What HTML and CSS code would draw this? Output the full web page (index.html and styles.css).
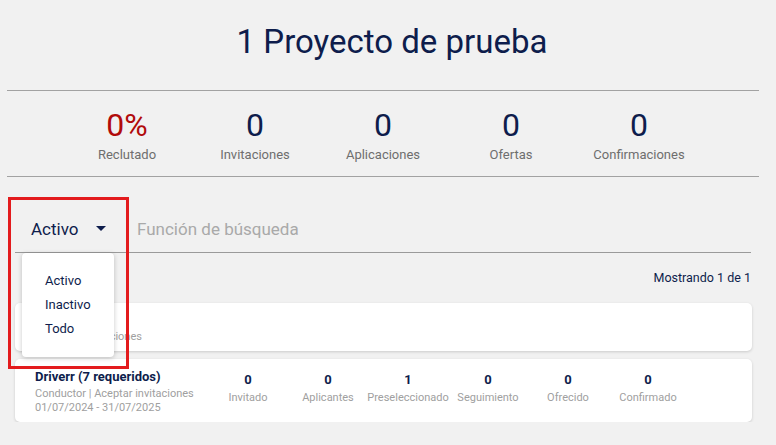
FILE: index.html
```html
<!DOCTYPE html>
<html lang="es">
<head>
  <meta charset="UTF-8" />
  <meta name="viewport" content="width=device-width, initial-scale=1" />
  <title>1 Proyecto de prueba</title>
  <link rel="stylesheet" href="styles.css">
</head>
<body>
  <main class="page">
    <header class="title">
      <h1>1 Proyecto de prueba</h1>
    </header>

    <section class="summary">
      <div class="summary-item">
        <span class="summary-num red">0%</span>
        <span class="summary-label">Reclutado</span>
      </div>
      <div class="summary-item">
        <span class="summary-num">0</span>
        <span class="summary-label">Invitaciones</span>
      </div>
      <div class="summary-item">
        <span class="summary-num">0</span>
        <span class="summary-label">Aplicaciones</span>
      </div>
      <div class="summary-item">
        <span class="summary-num">0</span>
        <span class="summary-label">Ofertas</span>
      </div>
      <div class="summary-item">
        <span class="summary-num">0</span>
        <span class="summary-label">Confirmaciones</span>
      </div>
    </section>

    <section class="filters">
      <div class="status-select">
        <span>Activo</span>
        <span class="caret"></span>
      </div>
      <div class="search">Función de búsqueda</div>

      <ul class="status-menu">
        <li>Activo</li>
        <li>Inactivo</li>
        <li>Todo</li>
      </ul>
      <div class="highlight"></div>
    </section>

    <p class="count">Mostrando 1 de 1</p>

    <section class="jobs">
      <div class="job job-short">
        <div class="job-info">
          <div class="job-name">Test (1)</div>
          <div class="job-meta">Rechazar invitaciones</div>
        </div>
      </div>

      <div class="job">
        <div class="job-info">
          <div class="job-name">Driverr (7 requeridos)</div>
          <div class="job-meta">Conductor | Aceptar invitaciones</div>
          <div class="job-meta">01/07/2024 - 31/07/2025</div>
        </div>
        <div class="job-stats">
          <div class="job-stat"><b>0</b><span>Invitado</span></div>
          <div class="job-stat"><b>0</b><span>Aplicantes</span></div>
          <div class="job-stat"><b>1</b><span>Preseleccionado</span></div>
          <div class="job-stat"><b>0</b><span>Seguimiento</span></div>
          <div class="job-stat"><b>0</b><span>Ofrecido</span></div>
          <div class="job-stat"><b>0</b><span>Confirmado</span></div>
        </div>
      </div>
    </section>
  </main>
</body>
</html>
```

FILE: styles.css
```css
body {
  margin: 0;
  background: #f1f1f1;
  font-family: Roboto, "Noto Sans", Arial, sans-serif;
  color: #0e1d4c;
}
.page {
  padding: 0 17px 0 7px;
}
.title h1 {
  margin: 0;
  height: 91px;
  padding: 22px 0 0 18px;
  box-sizing: border-box;
  font-size: 33px;
  font-weight: 400;
  text-align: center;
  border-bottom: 1px solid #a2a2a2;
}
.summary {
  display: grid;
  grid-template-columns: repeat(5, 128px);
  justify-content: center;
  height: 86px;
  padding-top: 16px;
  box-sizing: border-box;
  border-bottom: 1px solid #a2a2a2;
}
.summary-item {
  display: flex;
  flex-direction: column;
  align-items: center;
}
.summary-num {
  font-size: 32px;
  line-height: 36px;
}
.summary-num.red {
  color: #b10b0b;
}
.summary-label {
  font-size: 13px;
  color: #6e6e6e;
  margin-top: 4px;
}
.filters {
  position: relative;
  display: flex;
  align-items: center;
  margin: 0 8px;
  height: 76px;
  padding-top: 28px;
  box-sizing: border-box;
  border-bottom: 1px solid #9a9a9a;
}
.status-select {
  display: flex;
  align-items: center;
  width: 122px;
  padding-left: 16px;
  box-sizing: border-box;
  font-size: 17px;
}
.caret {
  margin-left: 17px;
  width: 0;
  height: 0;
  border-left: 5px solid transparent;
  border-right: 5px solid transparent;
  border-top: 5px solid #0e1d4c;
}
.search {
  font-size: 17px;
  color: #a9a9a9;
}
.status-menu {
  position: absolute;
  left: 7px;
  top: 76px;
  z-index: 2;
  width: 92px;
  height: 104px;
  margin: 0;
  padding: 16px 0 0 23px;
  box-sizing: border-box;
  list-style: none;
  background: #fff;
  border-radius: 4px;
  box-shadow: 0 1px 5px rgba(0,0,0,0.22);
  font-size: 13px;
}
.status-menu li {
  line-height: 24px;
}
.highlight {
  position: absolute;
  left: -7px;
  top: 20px;
  z-index: 3;
  width: 121px;
  height: 172px;
  box-sizing: border-box;
  border: 3px solid #e31b1d;
}
.count {
  margin: 0 8px;
  padding: 17px 0 17px;
  text-align: right;
  font-size: 12.5px;
  line-height: 16px;
}
.jobs {
  display: flex;
  flex-direction: column;
  gap: 8px;
  margin: 0 7px 0 8px;
}
.job {
  display: flex;
  background: #fff;
  border-radius: 5px;
  box-shadow: 0 1px 3px rgba(0,0,0,0.16);
  padding: 10px 0 7px 20px;
}
.job-short {
  height: 48px;
  box-sizing: border-box;
  padding-top: 9px;
}
.job-info {
  width: 173px;
}
.job-name {
  font-size: 13px;
  font-weight: 700;
  line-height: 16px;
}
.job-meta {
  font-size: 11px;
  color: #a0a0a0;
  line-height: 14px;
}
.job-name + .job-meta {
  margin-top: 2px;
}
.job-stats {
  display: grid;
  grid-template-columns: repeat(6, 80px);
  padding-top: 3px;
}
.job-stat {
  display: flex;
  flex-direction: column;
  align-items: center;
}
.job-stat b {
  font-size: 13px;
  line-height: 16px;
}
.job-stat span {
  font-size: 11px;
  color: #a0a0a0;
  margin-top: 3px;
}
```
